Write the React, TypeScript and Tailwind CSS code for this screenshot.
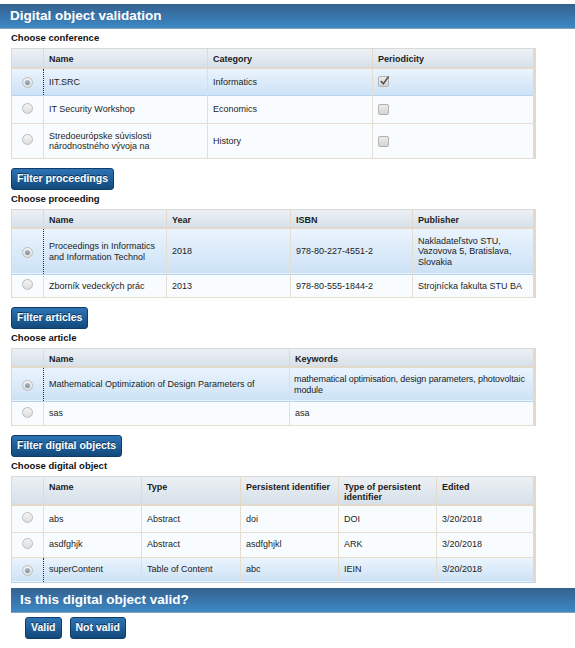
import React from 'react'

type Row = { cells: React.ReactNode[]; selected?: boolean; h: number }

function Radio({ on }: { on?: boolean }) {
  return (
    <span className="inline-flex h-[11px] w-[11px] items-center justify-center rounded-full border border-[#bdbdbd] bg-gradient-to-b from-[#f4f4f4] to-[#dedede]">
      {on && <span className="h-[5px] w-[5px] rounded-full bg-gradient-to-b from-[#a9b7c6] to-[#7d93aa]" />}
    </span>
  )
}

function Check({ on }: { on?: boolean }) {
  return (
    <span className="relative inline-block h-[11px] w-[11px] rounded-[2px] border border-[#b3b3b3] bg-gradient-to-b from-[#ececec] to-[#d4d4d4] align-middle">
      {on && (
        <svg viewBox="0 0 12 12" className="absolute left-[0px] top-[-2px] h-[11px] w-[11px]">
          <path d="M2 6.5 L4.8 9.5 L10.5 1.5" fill="none" stroke="#555" strokeWidth="1.8" />
        </svg>
      )}
    </span>
  )
}

function Grid({ cols, head, rows, headH }: { cols: number[]; head: string[]; rows: Row[]; headH: number }) {
  return (
    <table className="w-[523px] table-fixed border-collapse border border-[#d9d9d9] border-r-[3px] border-r-[#e2d9cd] text-[9px] text-[#1c1c1c]">
      <colgroup>
        <col style={{ width: 32 }} />
        {cols.map((w, i) => (
          <col key={i} style={{ width: w }} />
        ))}
      </colgroup>
      <thead>
        <tr style={{ height: headH }} className="bg-gradient-to-b from-[#edf1f5] to-[#d6e0e9]">
          <th className="border-r border-b-[2px] border-[#e3d9cb]" />
          {head.map((t, i) => (
            <th key={i} className="border-r border-b-[2px] border-[#e3d9cb] px-[4px] pl-[5px] pt-[5px] text-left align-top font-bold leading-[10px] last:border-r-0">
              {t}
            </th>
          ))}
        </tr>
      </thead>
      <tbody>
        {rows.map((r, ri) => (
          <tr
            key={ri}
            style={{ height: r.h }}
            className={
              r.selected
                ? 'border-y border-[#b7d4ee] bg-gradient-to-b from-[#eaf4fd] to-[#cde2f6]'
                : 'border-b border-[#e6ddd1] bg-[#f9fcff]'
            }
          >
            <td className={r.selected ? 'border border-dotted border-[#1a237e] text-center' : 'border-r border-[#e6ddd1] text-center'}>
              <span className="inline-flex translate-y-[1px]">
                <Radio on={r.selected} />
              </span>
            </td>
            {r.cells.map((c, ci) => (
              <td key={ci} className="border-r border-[#e6ddd1] px-[4px] pl-[5px] align-middle leading-[10.5px] last:border-r-0">
                {c}
              </td>
            ))}
          </tr>
        ))}
      </tbody>
    </table>
  )
}

function Btn({ children }: { children: React.ReactNode }) {
  return (
    <button className="h-[22px] rounded-[3px] border border-[#0f3d68] bg-gradient-to-b from-[#2d74b5] to-[#12497c] px-[5px] text-[10.5px] font-bold text-white [text-shadow:0_-1px_0_#0b2f52]">
      {children}
    </button>
  )
}

function Label({ children }: { children: React.ReactNode }) {
  return <div className="mt-[4px] pl-[11px] text-[9.5px] font-bold leading-[10px] text-[#111]">{children}</div>
}

export default function App() {
  return (
    <div className="h-[648px] w-[575px] overflow-hidden bg-white pt-[4px] font-['Liberation_Sans',Arial,sans-serif]">
      <div className="flex h-[25px] items-center border-b border-[#8aa2b8] bg-gradient-to-b from-[#33628f] to-[#3e88c6] pl-[10px] text-[13.5px] font-bold text-white">
        Digital object validation
      </div>

      <Label>Choose conference</Label>
      <div className="mt-[5px] pl-[11px]">
        <Grid
          cols={[164, 165, 162]}
          head={['Name', 'Category', 'Periodicity']}
          headH={19}
          rows={[
            { selected: true, h: 28, cells: ['IIT.SRC', 'Informatics', <Check on />] },
            { h: 28, cells: ['IT Security Workshop', 'Economics', <Check />] },
            { h: 35, cells: ['Stredoeurópske súvislosti národnostného vývoja na', 'History', <Check />] },
          ]}
        />
      </div>

      <div className="mt-[6px] pl-[11px]">
        <Btn>Filter proceedings</Btn>
      </div>
      <Label>Choose proceeding</Label>
      <div className="mt-[5px] pl-[11px]">
        <Grid
          cols={[123, 124, 122, 122]}
          head={['Name', 'Year', 'ISBN', 'Publisher']}
          headH={19}
          rows={[
            {
              selected: true,
              h: 46,
              cells: ['Proceedings in Informatics and Information Technol', '2018', '978-80-227-4551-2', 'Nakladateľstvo STU, Vazovova 5, Bratislava, Slovakia'],
            },
            { h: 23, cells: ['Zborník vedeckých prác', '2013', '978-80-555-1844-2', 'Strojnícka fakulta STU BA'] },
          ]}
        />
      </div>

      <div className="mt-[6px] pl-[11px]">
        <Btn>Filter articles</Btn>
      </div>
      <Label>Choose article</Label>
      <div className="mt-[5px] pl-[11px]">
        <Grid
          cols={[246, 245]}
          head={['Name', 'Keywords']}
          headH={19}
          rows={[
            {
              selected: true,
              h: 34,
              cells: [
                'Mathematical Optimization of Design Parameters of',
                <span className="block -ml-[1px] -mr-[3px] tracking-[-0.1px]">mathematical optimisation, design parameters, photovoltaic module</span>,
              ],
            },
            { h: 24, cells: ['sas', 'asa'] },
          ]}
        />
      </div>

      <div className="mt-[6px] pl-[11px]">
        <Btn>Filter digital objects</Btn>
      </div>
      <Label>Choose digital object</Label>
      <div className="mt-[5px] pl-[11px]">
        <Grid
          cols={[98, 99, 98, 98, 98]}
          head={['Name', 'Type', 'Persistent identifier', 'Type of persistent identifier', 'Edited']}
          headH={29}
          rows={[
            { h: 27, cells: ['abs', 'Abstract', 'doi', 'DOI', '3/20/2018'] },
            { h: 25, cells: ['asdfghjk', 'Abstract', 'asdfghjkl', 'ARK', '3/20/2018'] },
            { selected: true, h: 25, cells: ['superContent', 'Table of Content', 'abc', 'IEIN', '3/20/2018'] },
          ]}
        />
      </div>

      <div className="mt-[5px] pl-[11px]">
        <div className="flex h-[25px] items-center border-b border-[#8aa2b8] bg-gradient-to-b from-[#33628f] to-[#3e88c6] pl-[9px] text-[13.5px] font-bold text-white">
          Is this digital object valid?
        </div>
      </div>
      <div className="mt-[4px] flex gap-[8px] pl-[25px]">
        <Btn>Valid</Btn>
        <Btn>Not valid</Btn>
      </div>
    </div>
  )
}
